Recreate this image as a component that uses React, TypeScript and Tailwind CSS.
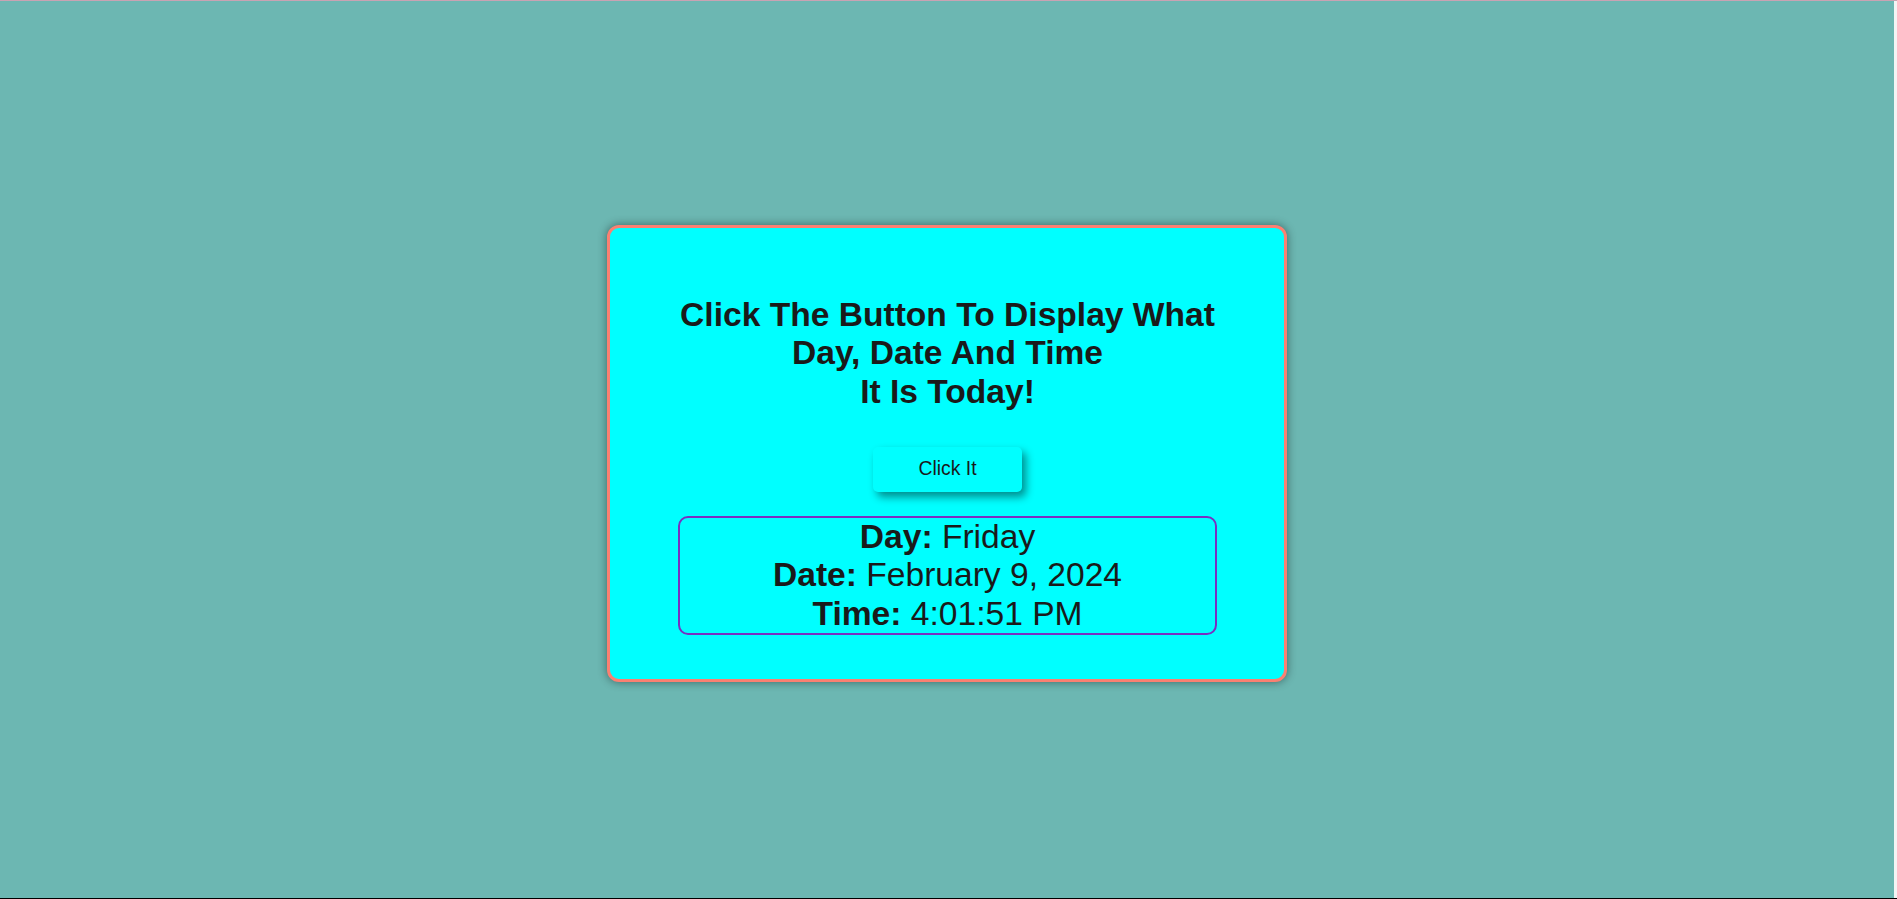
import React, { useState } from "react";

interface Stamp {
  day: string;
  date: string;
  time: string;
}

const formatStamp = (d: Date): Stamp => ({
  day: d.toLocaleDateString("en-US", { weekday: "long" }),
  date: d.toLocaleDateString("en-US", { month: "long", day: "numeric", year: "numeric" }),
  time: d.toLocaleTimeString("en-US"),
});

const App: React.FC = () => {
  // starts on the moment shown in the screenshot
  const [stamp, setStamp] = useState<Stamp>({
    day: "Friday",
    date: "February 9, 2024",
    time: "4:01:51 PM",
  });

  return (
    <div className="flex h-[899px] w-full flex-col font-['Liberation_Sans',Arial,sans-serif] text-[#1a1a1a]">
      <div className="h-px w-full bg-[#c9a3b3]" />
      <div className="flex flex-1">
        <div className="flex flex-1 items-center justify-center bg-[#6cb7b2] pt-[8px]">
          <div className="w-[680px] rounded-[12px] border-[3px] border-[#fa8072] bg-[#00ffff] pl-[68px] pr-[67px] pt-[68px] pb-[44px] shadow-[0_0_10px_rgba(0,0,0,0.45)]">
            <h1 className="text-center text-[33.6px] font-bold leading-[38.6px]">
              Click The Button To Display What
              <br />
              Day, Date And Time
              <br />
              It Is Today!
            </h1>

            <div className="mt-[35px] flex justify-center">
              <button
                type="button"
                onClick={() => setStamp(formatStamp(new Date()))}
                className="h-[45px] w-[149px] rounded-[5px] bg-[#00ffff] text-[19.4px] shadow-[4px_5px_8px_rgba(0,0,0,0.45)]"
              >
                Click It
              </button>
            </div>

            <div className="mt-[24px] rounded-[10px] border-2 border-[#7a2fc0] text-center text-[33.6px] leading-[38.6px]">
              <p>
                <span className="font-bold">Day:</span> {stamp.day}
              </p>
              <p>
                <span className="font-bold">Date:</span> {stamp.date}
              </p>
              <p>
                <span className="font-bold">Time:</span> {stamp.time}
              </p>
            </div>
          </div>
        </div>
        <div className="w-[3px] bg-[#f4f4f4]" />
      </div>
      <div className="h-px w-full bg-black" />
    </div>
  );
};

export default App;
